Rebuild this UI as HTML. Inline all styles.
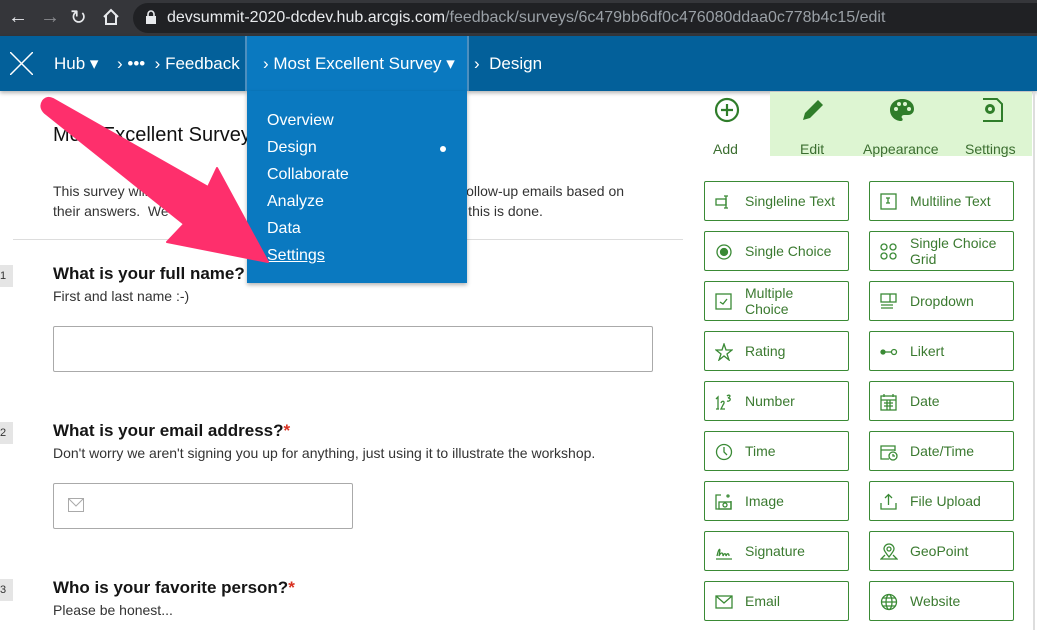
<!DOCTYPE html>
<html><head><meta charset="utf-8"><style>
*{margin:0;padding:0;box-sizing:border-box}
body{width:1037px;height:630px;overflow:hidden;background:#fff;font-family:"Liberation Sans",sans-serif;position:relative}
.a{position:absolute}
.chrome{left:0;top:0;width:1037px;height:36px;background:#35363a}
.url{left:133px;top:3px;width:920px;height:30px;border-radius:15px;background:#202124;color:#9aa0a6;font-size:16px;line-height:30px;padding-left:34px}
.url b{color:#e8eaed;font-weight:normal}
.nav{left:0;top:36px;width:1037px;height:55px;background:#03609a;box-shadow:0 2px 4px rgba(0,0,0,.3)}
.nv{color:#fff;font-size:17px;top:54px}
.act{left:245px;top:36px;width:224px;height:55px;background:#0a79c0;border-left:2px solid #4d8fbf;border-right:2px solid #4d8fbf}
.dd{left:247px;top:91px;width:220px;height:192px;background:#0a79c0;box-shadow:0 2px 4px rgba(0,0,0,.3);z-index:5}
.dd div{position:absolute;left:20px;color:#fff;font-size:16px}
.t{color:#111}
.btn{position:absolute;width:145px;height:40px;border:1.5px solid #3a8a35;border-radius:2px;color:#3b7a30;font-size:14px}
.btn span{position:absolute;left:40px;top:50%;transform:translateY(-50%);line-height:16px}
.btn svg{position:absolute;left:10px;top:11px;width:18px;height:18px;fill:none;stroke:#3a8a35;stroke-width:1.3}
.num{left:0;width:13px;height:22px;background:#e5e5e5;font-size:11px;line-height:22px;color:#333}
.q{left:53px;font-size:17px;font-weight:bold;color:#151515}
.q i{color:#d83020;font-style:normal}
.s{left:53px;font-size:14px;color:#333}
.tab{top:141px;font-size:14px;color:#3b6e30}
</style></head><body>
<div class="a chrome"></div>
<div class="a" style="left:8px;top:6px;color:#e8eaed;font-size:20px">&#8592;</div>
<div class="a" style="left:40px;top:6px;color:#8a8b8f;font-size:20px">&#8594;</div>
<div class="a" style="left:70px;top:5px;color:#e8eaed;font-size:20px">&#8635;</div>
<svg class="a" style="left:102px;top:8px" width="18" height="18" viewBox="0 0 18 18"><path d="M2 9 L9 2 L16 9 M4 7 V16 H14 V7" fill="none" stroke="#e8eaed" stroke-width="2"/></svg>
<div class="a url"><b>devsummit-2020-dcdev.hub.arcgis.com</b>/feedback/surveys/6c479bb6df0c476080ddaa0c778b4c15/edit</div>
<svg class="a" style="left:145px;top:10px" width="12" height="15"><rect x="1" y="6" width="10" height="8" fill="#e8eaed"/><path d="M3 6V4a3 3 0 0 1 6 0v2" fill="none" stroke="#e8eaed" stroke-width="1.6"/></svg>
<div class="a nav"></div>
<div class="a act"></div>
<svg class="a" style="left:10px;top:52px" width="23" height="23"><path d="M0 0L23 23M23 0L0 23" stroke="#fff" stroke-width="1.5"/></svg>
<div class="a nv" style="left:54px">Hub &#9662;</div>
<div class="a nv" style="left:117px">›&nbsp;&#8226;&#8226;&#8226;&nbsp;&nbsp;›&nbsp;Feedback</div>
<div class="a nv" style="left:263px">›&nbsp;Most Excellent Survey &#9662;</div>
<div class="a nv" style="left:474px">›&nbsp;&nbsp;Design</div>
<div class="a t" style="left:53px;top:124px;font-size:20px">Most Excellent Survey</div>
<div class="a" style="left:53px;top:181px;font-size:14px;color:#333;line-height:20px;width:620px">This survey will&nbsp;&nbsp;&nbsp;&nbsp;&nbsp;&nbsp;&nbsp;&nbsp;&nbsp;&nbsp;&nbsp;&nbsp;&nbsp;&nbsp;&nbsp;&nbsp;&nbsp;&nbsp;&nbsp;&nbsp;&nbsp;&nbsp;&nbsp;&nbsp;&nbsp;&nbsp;&nbsp;&nbsp;&nbsp;&nbsp;&nbsp;&nbsp;&nbsp;&nbsp;&nbsp;&nbsp;&nbsp;&nbsp;&nbsp;&nbsp;&nbsp;&nbsp;&nbsp;&nbsp;&nbsp;&nbsp;&nbsp;&nbsp;&nbsp;&nbsp;&nbsp;&nbsp;&nbsp;&nbsp;&nbsp;&nbsp;&nbsp;&nbsp;&nbsp;&nbsp;&nbsp;&nbsp;&nbsp;&nbsp;&nbsp;&nbsp;&nbsp;&nbsp;&nbsp;&nbsp;&nbsp;&nbsp;&nbsp;&nbsp;&nbsp;&nbsp;&nbsp;&nbsp;s follow-up emails based on<br>their answers.&nbsp; We&nbsp;&nbsp;&nbsp;&nbsp;&nbsp;&nbsp;&nbsp;&nbsp;&nbsp;&nbsp;&nbsp;&nbsp;&nbsp;&nbsp;&nbsp;&nbsp;&nbsp;&nbsp;&nbsp;&nbsp;&nbsp;&nbsp;&nbsp;&nbsp;&nbsp;&nbsp;&nbsp;&nbsp;&nbsp;&nbsp;&nbsp;&nbsp;&nbsp;&nbsp;&nbsp;&nbsp;&nbsp;&nbsp;&nbsp;&nbsp;&nbsp;&nbsp;&nbsp;&nbsp;&nbsp;&nbsp;&nbsp;&nbsp;&nbsp;&nbsp;&nbsp;&nbsp;&nbsp;&nbsp;&nbsp;&nbsp;&nbsp;&nbsp;&nbsp;&nbsp;&nbsp;&nbsp;&nbsp;&nbsp;&nbsp;&nbsp;&nbsp;&nbsp;&nbsp;&nbsp;&nbsp;&nbsp;&nbsp;&nbsp;&nbsp;&nbsp;&nbsp;this is done.</div>
<div class="a" style="left:13px;top:239px;width:670px;height:1px;background:#ddd"></div>
<div class="a dd">
<div style="top:21px">Overview</div>
<div style="top:48px">Design</div>
<div style="top:75px">Collaborate</div>
<div style="top:102px">Analyze</div>
<div style="top:129px">Data</div>
<div style="top:156px;text-decoration:underline">Settings</div>
<span class="a" style="left:193px;top:55px;width:6px;height:6px;border-radius:3px;background:#fff"></span>
</div>
<div class="a num" style="top:265px">1</div>
<div class="a q" style="top:264px">What is your full name?</div>
<div class="a s" style="top:288px">First and last name :-)</div>
<div class="a" style="left:53px;top:326px;width:600px;height:46px;border:1px solid #aaa;border-radius:2px"></div>
<div class="a num" style="top:422px">2</div>
<div class="a q" style="top:421px">What is your email address?<i>*</i></div>
<div class="a s" style="top:445px">Don't worry we aren't signing you up for anything, just using it to illustrate the workshop.</div>
<div class="a" style="left:53px;top:483px;width:300px;height:46px;border:1px solid #aaa;border-radius:2px"></div>
<svg class="a" style="left:68px;top:498px" width="17" height="15"><rect x=".5" y=".5" width="15" height="13" fill="none" stroke="#aaa"/><path d="M1 1L8 8L15 1" fill="none" stroke="#aaa"/></svg>
<div class="a num" style="top:579px">3</div>
<div class="a q" style="top:578px">Who is your favorite person?<i>*</i></div>
<div class="a s" style="top:602px">Please be honest...</div>
<svg class="a" style="left:0;top:0;z-index:6" width="300" height="300"><path d="M43 101 Q47 96 53 99 L208 187 L217 168 L268 262 L167 242 L184 224 L45 113 Q39 107 43 101 Z" fill="#fe2f6c" stroke="#fe2f6c" stroke-width="2" stroke-linejoin="round"/></svg>
<div class="a" style="left:770px;top:92px;width:262px;height:64px;background:#ddf5d2"></div>
<div class="a" style="left:1033px;top:92px;width:2px;height:538px;background:#ddd"></div>
<svg class="a" style="left:714px;top:97px" width="26" height="26"><circle cx="13" cy="13" r="11" fill="none" stroke="#2f7d2a" stroke-width="2.2"/><path d="M13 7V19M7 13H19" stroke="#2f7d2a" stroke-width="2.2"/></svg>
<svg class="a" style="left:800px;top:97px" width="26" height="26"><path d="M3 23L5 16L18 3L23 8L10 21Z" fill="#2f7d2a"/></svg>
<svg class="a" style="left:889px;top:97px" width="26" height="26"><path d="M13 2C6 2 1 7 1 13c0 6 5 11 11 11 2 0 2-2 1-3s0-3 2-3h4c4 0 6-3 6-6C25 6 20 2 13 2z" fill="#2f7d2a"/><circle cx="7" cy="12" r="2" fill="#ddf5d2"/><circle cx="10" cy="7" r="2" fill="#ddf5d2"/><circle cx="16" cy="7" r="2" fill="#ddf5d2"/><circle cx="20" cy="12" r="2" fill="#ddf5d2"/></svg>
<svg class="a" style="left:978px;top:97px" width="26" height="26"><path d="M5 2H19L24 7V24H5" fill="none" stroke="#2f7d2a" stroke-width="2"/><circle cx="12" cy="12" r="5" fill="#2f7d2a"/><circle cx="12" cy="12" r="2" fill="#ddf5d2"/></svg>
<div class="a tab" style="left:713px">Add</div>
<div class="a tab" style="left:800px">Edit</div>
<div class="a tab" style="left:863px">Appearance</div>
<div class="a tab" style="left:965px">Settings</div>

<div class="btn" style="left:704px;top:181px"><svg><rect x="1" y="6" width="10" height="6"/><path d="M11 3V15M9 3H13M9 15H13"/></svg><span>Singleline Text</span></div>
<div class="btn" style="left:869px;top:181px"><svg><rect x="1" y="1" width="15" height="15"/><path d="M6 5H10M8 5V10M6 10H10"/></svg><span>Multiline Text</span></div>
<div class="btn" style="left:704px;top:231px"><svg><circle cx="9" cy="9" r="7"/><circle cx="9" cy="9" r="3.5" fill="#3a8a35"/></svg><span>Single Choice</span></div>
<div class="btn" style="left:869px;top:231px"><svg><circle cx="4" cy="4" r="3"/><circle cx="13" cy="4" r="3"/><circle cx="4" cy="13" r="3"/><circle cx="13" cy="13" r="3"/></svg><span>Single Choice<br>Grid</span></div>
<div class="btn" style="left:704px;top:281px"><svg><rect x="1" y="1" width="15" height="15"/><path d="M5 9L8 11L12 6"/></svg><span>Multiple<br>Choice</span></div>
<div class="btn" style="left:869px;top:281px"><svg><rect x="1" y="1" width="15" height="8"/><path d="M10 1V9M1 12H13M1 15H13"/></svg><span>Dropdown</span></div>
<div class="btn" style="left:704px;top:331px"><svg><path d="M9 1L11 7H17L12 11L14 17L9 13L4 17L6 11L1 7H7Z"/></svg><span>Rating</span></div>
<div class="btn" style="left:869px;top:331px"><svg><circle cx="3" cy="9" r="2" fill="#3a8a35"/><path d="M5 9H11"/><circle cx="14" cy="9" r="2.5"/></svg><span>Likert</span></div>
<div class="btn" style="left:704px;top:381px"><svg><path d="M1 6L3 4V16M4 16H1M6 10C7 7 11 8 8 12L6 16H10M12 3C14 1 17 3 13 5C17 5 15 9 12 8"/></svg><span>Number</span></div>
<div class="btn" style="left:869px;top:381px"><svg><rect x="1" y="3" width="15" height="14"/><path d="M1 7H16M4 1V4M13 1V4M4 10H13M4 13H13M7 7V17M10 7V17"/></svg><span>Date</span></div>
<div class="btn" style="left:704px;top:431px"><svg><circle cx="9" cy="9" r="7.5"/><path d="M9 4V9L12 12"/></svg><span>Time</span></div>
<div class="btn" style="left:869px;top:431px"><svg><path d="M9 16H1V3H15V8M1 7H15"/><circle cx="13" cy="13" r="4"/><path d="M13 11V13H15"/></svg><span>Date/Time</span></div>
<div class="btn" style="left:704px;top:481px"><svg><path d="M6 2H1V16H16V8"/><rect x="4" y="9" width="12" height="7"/><circle cx="10" cy="12" r="2"/><circle cx="13" cy="3" r="1"/></svg><span>Image</span></div>
<div class="btn" style="left:869px;top:481px"><svg><path d="M1 10V16H16V10M8.5 2V12M5 5L8.5 1.5L12 5"/></svg><span>File Upload</span></div>
<div class="btn" style="left:704px;top:531px"><svg><path d="M1 16H17M2 13C4 4 6 4 4 13C6 9 8 9 8 13C9 10 11 10 11 13C12 10 14 10 14 13"/></svg><span>Signature</span></div>
<div class="btn" style="left:869px;top:531px"><svg><path d="M9 14C5 9 4 7 4 6A5 5 0 0 1 14 6C14 7 13 9 9 14Z"/><circle cx="9" cy="6" r="2"/><path d="M5 12L1 16H17L13 12"/></svg><span>GeoPoint</span></div>
<div class="btn" style="left:704px;top:581px"><svg><rect x="1" y="3" width="16" height="12"/><path d="M1 3L9 10L17 3"/></svg><span>Email</span></div>
<div class="btn" style="left:869px;top:581px"><svg><circle cx="9" cy="9" r="7.5"/><ellipse cx="9" cy="9" rx="3" ry="7.5"/><path d="M1.5 9H16.5M3 5H15M3 13H15"/></svg><span>Website</span></div>
</body></html>
